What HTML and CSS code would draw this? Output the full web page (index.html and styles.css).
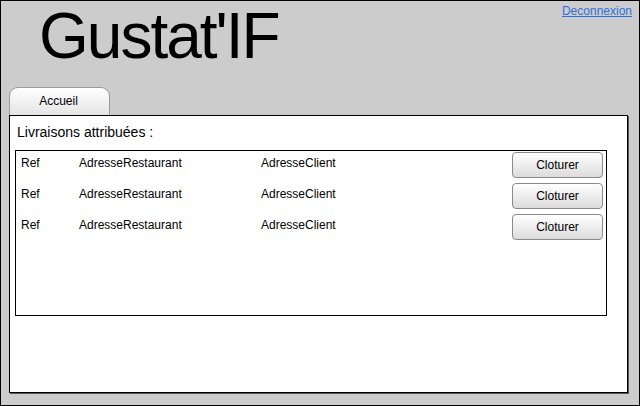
FILE: index.html
```html
<!DOCTYPE html>
<html lang="fr">
<head>
<meta charset="utf-8">
<title>Gustat'IF</title>
<link rel="stylesheet" href="styles.css">
</head>
<body>
<div class="frame">
  <header class="header">
    <h1 class="title">Gustat'IF</h1>
    <a class="logout" href="#">Deconnexion</a>
  </header>
  <nav class="tabs">
    <div class="tab">Accueil</div>
  </nav>
  <main class="panel">
    <div class="label">Livraisons attribuées :</div>
    <div class="list">
      <div class="row">
        <span class="c-ref">Ref</span>
        <span class="c-resto">AdresseRestaurant</span>
        <span class="c-client">AdresseClient</span>
        <button class="btn">Cloturer</button>
      </div>
      <div class="row">
        <span class="c-ref">Ref</span>
        <span class="c-resto">AdresseRestaurant</span>
        <span class="c-client">AdresseClient</span>
        <button class="btn">Cloturer</button>
      </div>
      <div class="row">
        <span class="c-ref">Ref</span>
        <span class="c-resto">AdresseRestaurant</span>
        <span class="c-client">AdresseClient</span>
        <button class="btn">Cloturer</button>
      </div>
    </div>
  </main>
</div>
</body>
</html>
```
FILE: styles.css
```css
* { box-sizing: border-box; }
html, body { margin: 0; padding: 0; }
body {
  font-family: "Liberation Sans", Arial, sans-serif;
  color: #000;
  background: #fff;
}
.frame {
  width: 640px;
  height: 406px;
  border: 1px solid #000;
  background: #cccccc;
  padding: 0 11px 12px 8px;
  display: flex;
  flex-direction: column;
}
.header {
  height: 86px;
  display: flex;
  justify-content: space-between;
  align-items: flex-start;
}
.title {
  margin: 0;
  padding: 3px 0 0 30px;
  font-weight: normal;
  font-size: 64px;
  line-height: 1;
  letter-spacing: -2px;
}
.logout {
  margin-top: 3px;
  margin-right: -4px;
  font-size: 12px;
  color: #2f6fdb;
  text-decoration: underline;
}
.tabs {
  display: flex;
  height: 28px;
}
.tab {
  width: 101px;
  height: 28px;
  border: 1px solid #9a9a9a;
  border-bottom: none;
  border-radius: 9px 9px 0 0;
  background: linear-gradient(#ffffff, #e4e4e4);
  font-size: 12px;
  text-align: center;
  padding-right: 2px;
  line-height: 26px;
}
.panel {
  flex: 1;
  background: #fff;
  border: 1px solid #000;
  box-shadow: 1px 1px 0 #555;
  padding: 8px 0 0 5px;
}
.label {
  font-size: 14px;
  padding-left: 2px;
  line-height: 17px;
}
.list {
  margin-top: 9px;
  width: 592px;
  height: 166px;
  border: 1px solid #000;
  padding: 1px 3px 0 5px;
  display: flex;
  flex-direction: column;
  gap: 5px;
}
.row {
  display: flex;
  align-items: flex-start;
  font-size: 12px;
}
.row span { line-height: 18px; padding-top: 2px; }
.c-ref { width: 58px; }
.c-resto { width: 182px; }
.c-client { flex: 1; }
.btn {
  width: 91px;
  height: 26px;
  border: 1px solid #8a8a8a;
  border-radius: 4px;
  background: linear-gradient(#ffffff, #dcdcdc);
  font-family: "Liberation Sans", Arial, sans-serif;
  font-size: 12px;
  color: #000;
  padding: 0;
}
```
